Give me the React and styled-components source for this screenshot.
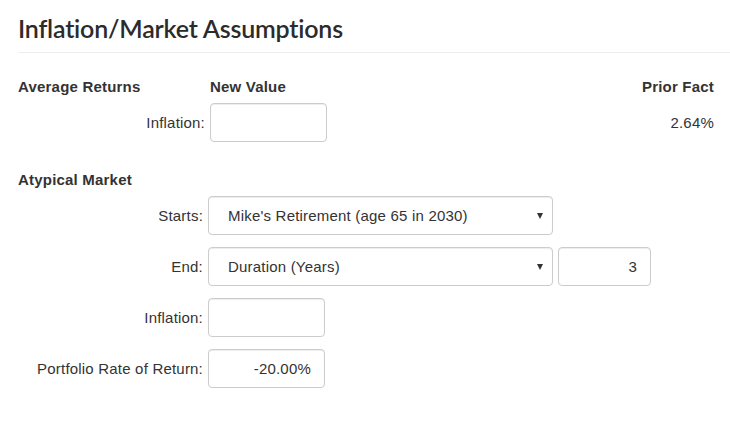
import React from "react";
import styled, { createGlobalStyle } from "styled-components";

const GlobalStyle = createGlobalStyle`
  body {
    margin: 0;
    background: #fff;
    font-family: "Liberation Sans", Arial, sans-serif;
    font-size: 15px;
    letter-spacing: 0.2px;
    color: #333;
  }
`;

const App = () => {
  return (
    <>
      <GlobalStyle />
      <Page>
        <Title>Inflation/Market Assumptions</Title>
        <Divider />

        <Section>
          <AverageGrid>
            <HeadCell>Average Returns</HeadCell>
            <HeadCell>New Value</HeadCell>
            <HeadCell $right>Prior Fact</HeadCell>
          </AverageGrid>
          <AverageGrid $top={6}>
            <Label>Inflation:</Label>
            <TextInput $width={117} defaultValue="" />
            <PriorValue>2.64%</PriorValue>
          </AverageGrid>
        </Section>

        <SectionTitle>Atypical Market</SectionTitle>
        <FormRows>
          <FormRow>
            <Label>Starts:</Label>
            <Select>
              <span>Mike's Retirement (age 65 in 2030)</span>
              <Caret />
            </Select>
          </FormRow>
          <FormRow>
            <Label>End:</Label>
            <Select>
              <span>Duration (Years)</span>
              <Caret />
            </Select>
            <TextInput $width={93} defaultValue="3" />
          </FormRow>
          <FormRow>
            <Label>Inflation:</Label>
            <TextInput $width={117} defaultValue="" />
          </FormRow>
          <FormRow>
            <Label>Portfolio Rate of Return:</Label>
            <TextInput $width={117} defaultValue="-20.00%" />
          </FormRow>
        </FormRows>
      </Page>
    </>
  );
};

export default App;

const Page = styled.div`
  width: 730px;
  height: 437px;
  padding: 13px 0 0 18px;
  box-sizing: border-box;
  overflow: hidden;
`;

const Title = styled.h1`
  margin: 0;
  font-family: "Lato", "Open Sans", sans-serif;
  font-size: 25px;
  font-weight: 600;
  line-height: 30px;
  color: #2b2b2b;
  letter-spacing: -0.2px;
`;

const Divider = styled.div`
  margin-top: 9px;
  height: 1px;
  background: #eeeeee;
`;

const Section = styled.div`
  margin-top: 24px;
`;

const AverageGrid = styled.div`
  display: grid;
  grid-template-columns: 187px 117px 1fr;
  column-gap: 5px;
  align-items: center;
  padding-right: 16px;
  margin-top: ${(p) => p.$top || 0}px;
`;

const HeadCell = styled.div`
  font-weight: bold;
  line-height: 20px;
  text-align: ${(p) => (p.$right ? "right" : "left")};
`;

const PriorValue = styled.div`
  text-align: right;
  color: #333;
`;

const SectionTitle = styled.div`
  margin-top: 28px;
  font-weight: bold;
  line-height: 20px;
`;

const FormRows = styled.div`
  margin-top: 6px;
  display: flex;
  flex-direction: column;
  gap: 12px;
`;

const FormRow = styled.div`
  display: grid;
  grid-template-columns: 185px auto auto;
  justify-content: start;
  column-gap: 5px;
  align-items: center;
`;

const Label = styled.label`
  text-align: right;
  color: #333;
  white-space: nowrap;
`;

const TextInput = styled.input`
  box-sizing: border-box;
  width: ${(p) => p.$width}px;
  height: 39px;
  padding: 0 13px;
  border: 1px solid #cccccc;
  border-radius: 4px;
  box-shadow: inset 0 1px 1px rgba(0, 0, 0, 0.075);
  font-family: "Liberation Sans", Arial, sans-serif;
  font-size: 15px;
  letter-spacing: 0.2px;
  color: #333;
  text-align: right;
  outline: none;
`;

const Select = styled.div`
  box-sizing: border-box;
  width: 345px;
  height: 39px;
  display: flex;
  align-items: center;
  justify-content: space-between;
  padding: 0 9px 0 19px;
  border: 1px solid #cccccc;
  border-radius: 4px;
  box-shadow: inset 0 1px 1px rgba(0, 0, 0, 0.075);
  color: #333;
`;

const Caret = styled.span`
  width: 0;
  height: 0;
  border-left: 3.5px solid transparent;
  border-right: 3.5px solid transparent;
  border-top: 6px solid #333;
`;
